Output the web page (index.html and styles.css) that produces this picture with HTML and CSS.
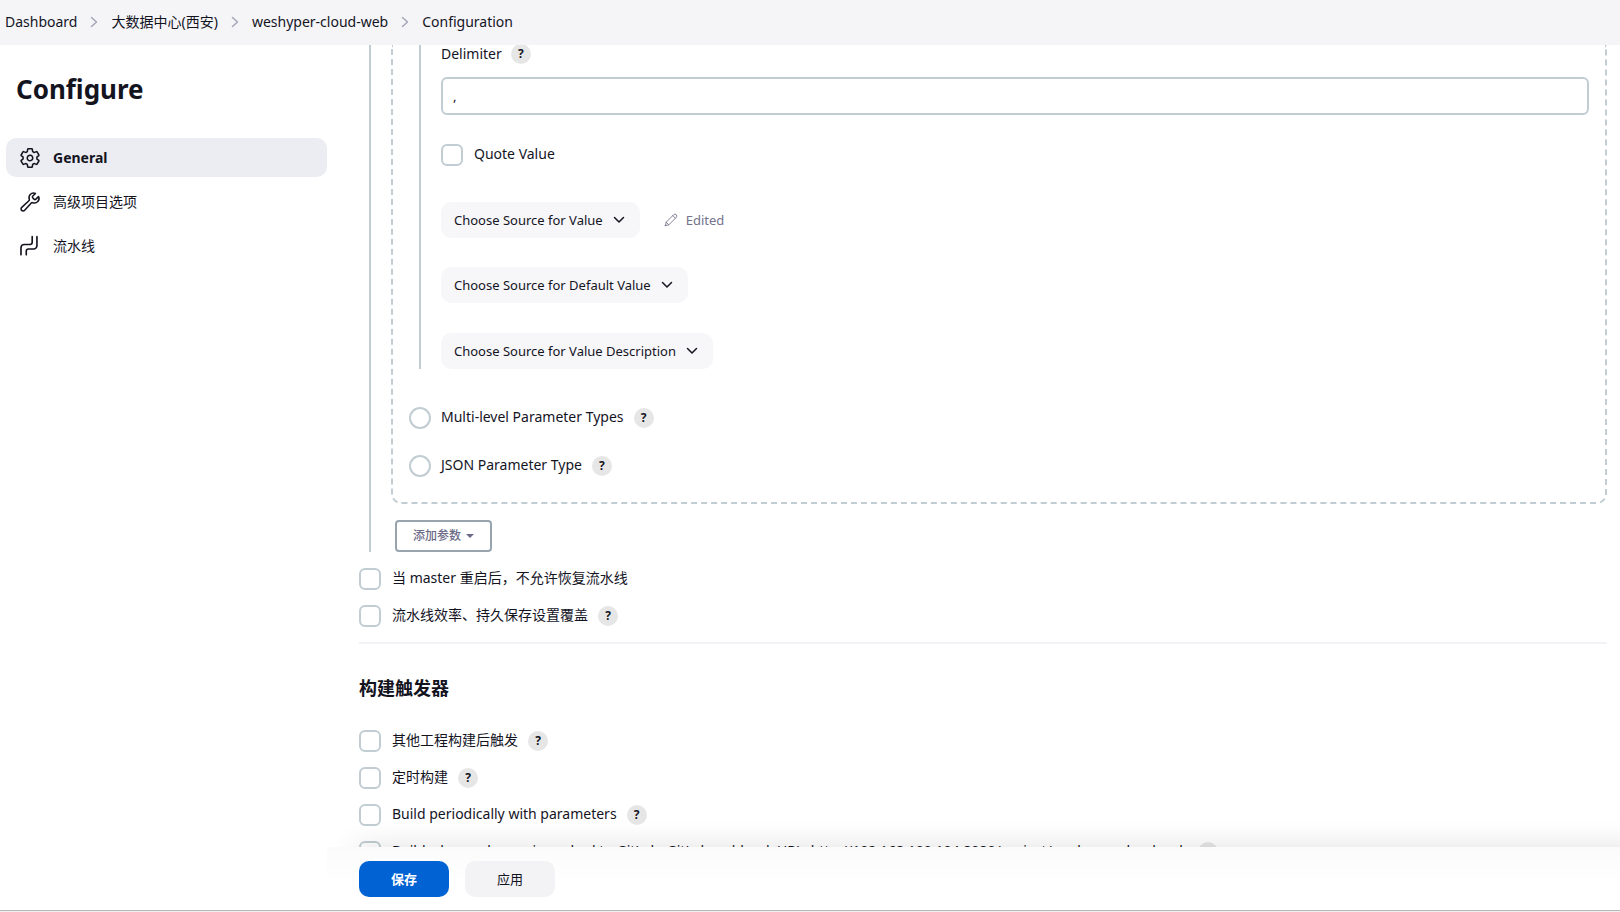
FILE: index.html
```html
<!DOCTYPE html>
<html lang="zh-CN">
<head>
    <meta charset="UTF-8">
    <meta name="viewport" content="width=device-width, initial-scale=1.0">
    <title>weshyper-cloud-web Config [Jenkins]</title>
    <link rel="stylesheet" href="styles.css">
</head>
<body>
    <nav class="breadcrumbs">
        <a href="#">Dashboard</a>
        <svg class="crumb-sep" viewBox="0 0 8 12"><path d="M1.5 1.5L6.5 6l-5 4.5"/></svg>
        <a href="#">大数据中心(西安)</a>
        <svg class="crumb-sep" viewBox="0 0 8 12"><path d="M1.5 1.5L6.5 6l-5 4.5"/></svg>
        <a href="#">weshyper-cloud-web</a>
        <svg class="crumb-sep" viewBox="0 0 8 12"><path d="M1.5 1.5L6.5 6l-5 4.5"/></svg>
        <a href="#">Configuration</a>
    </nav>

    <div class="page-body">
        <aside class="side-panel">
            <h1>Configure</h1>
            <nav class="tasks">
                <a class="task active" href="#general">
                    <svg class="task-icon" viewBox="0 0 512 512"><path d="M262.29 192.31a64 64 0 1057.4 57.4 64.13 64.13 0 00-57.4-57.4zM416.39 256a154.34 154.34 0 01-1.53 20.79l45.21 35.46a10.81 10.81 0 012.45 13.75l-42.77 74a10.81 10.81 0 01-13.14 4.59l-44.9-18.08a16.11 16.11 0 00-15.17 1.75A164.48 164.48 0 01325 400.8a15.94 15.94 0 00-8.82 12.14l-6.73 47.89a11.08 11.08 0 01-10.68 9.17h-85.54a11.11 11.11 0 01-10.69-8.87l-6.72-47.82a16.07 16.07 0 00-9-12.22 155.3 155.3 0 01-21.46-12.57 16 16 0 00-15.11-1.71l-44.89 18.07a10.81 10.81 0 01-13.14-4.58l-42.77-74a10.8 10.8 0 012.45-13.75l38.21-30a16.05 16.05 0 006-14.08c-.36-4.17-.58-8.33-.58-12.5s.21-8.27.58-12.35a16 16 0 00-6.07-13.94l-38.19-30A10.81 10.81 0 0149.48 186l42.77-74a10.81 10.81 0 0113.14-4.59l44.9 18.08a16.11 16.11 0 0015.17-1.75A164.48 164.48 0 01187 111.2a15.94 15.94 0 008.82-12.14l6.73-47.89A11.08 11.08 0 01213.23 42h85.54a11.11 11.11 0 0110.69 8.87l6.72 47.82a16.07 16.07 0 009 12.22 155.3 155.3 0 0121.46 12.57 16 16 0 0015.11 1.71l44.89-18.07a10.81 10.81 0 0113.14 4.58l42.77 74a10.8 10.8 0 01-2.45 13.75l-38.21 30a16.05 16.05 0 00-6.05 14.08c.33 4.14.55 8.3.55 12.47z"/></svg>
                    General
                </a>
                <a class="task" href="#advanced">
                    <svg class="task-icon" viewBox="0 0 512 512"><path d="M393.87 190a32.1 32.1 0 01-45.25 0l-26.57-26.57a32.09 32.09 0 010-45.26L382.19 58a1 1 0 00-.3-1.64c-38.82-16.64-89.15-8.16-121.11 23.57-30.58 30.35-32.32 76-21.12 115.84a31.93 31.93 0 01-9.06 32.08L64 380a48.17 48.17 0 1068 68l153.86-167a31.93 31.93 0 0131.6-9.13c39.54 10.59 84.54 8.6 114.72-21.19 32.49-32 39.5-88.56 23.75-120.93a1 1 0 00-1.6-.26z"/></svg>
                    高级项目选项
                </a>
                <a class="task" href="#pipeline">
                    <svg class="task-icon pipeline-icon" viewBox="0 0 20 20"><path d="M1.8 18v-6.4a3 3 0 013-3H10a2 2 0 002-2V1.500M6.600 18v-3.300a2 2 0 012-2h4.700a3 3 0 003-3V1.500"/></svg>
                    流水线
                </a>
            </nav>
        </aside>

        <main class="main-panel">
            <form class="config-form" id="config">
                <div class="nested">
                    <div class="param-card">
                        <div class="nested nested-inner">
                            <div class="field-title">
                                <label for="delimiter">Delimiter</label>
                                <button class="help" type="button">?</button>
                            </div>
                            <input class="text-input" id="delimiter" type="text" value=",">
                            <div class="option quote-value">
                                <input type="checkbox" id="quote">
                                <label for="quote">Quote Value</label>
                            </div>
                            <div class="source-row">
                                <button class="source-btn" type="button">Choose Source for Value
                                    <svg viewBox="0 0 12 8"><path d="M1.5 1.5L6 6l4.5-4.5"/></svg>
                                </button>
                                <span class="edited">
                                    <svg viewBox="0 0 16 16"><path d="M1.500 14.500l1-4L11 2a1.900 1.900 0 013 3l-8.500 8.500-4 1zM10 3l3 3M2.500 10.500l3 3"/></svg>
                                    Edited
                                </span>
                            </div>
                            <div class="source-row">
                                <button class="source-btn" type="button">Choose Source for Default Value
                                    <svg viewBox="0 0 12 8"><path d="M1.5 1.5L6 6l4.5-4.5"/></svg>
                                </button>
                            </div>
                            <div class="source-row">
                                <button class="source-btn" type="button">Choose Source for Value Description
                                    <svg viewBox="0 0 12 8"><path d="M1.5 1.5L6 6l4.5-4.5"/></svg>
                                </button>
                            </div>
                        </div>
                        <div class="option radio-option">
                            <input type="radio" name="type" id="multi">
                            <label for="multi">Multi-level Parameter Types</label>
                            <button class="help" type="button">?</button>
                        </div>
                        <div class="option radio-option">
                            <input type="radio" name="type" id="json">
                            <label for="json">JSON Parameter Type</label>
                            <button class="help" type="button">?</button>
                        </div>
                    </div>
                    <button class="add-param" type="button">添加参数 <span class="caret"></span></button>
                </div>

                <div class="options">
                    <div class="option">
                        <input type="checkbox" id="resume">
                        <label for="resume">当 master 重启后，不允许恢复流水线</label>
                    </div>
                    <div class="option">
                        <input type="checkbox" id="durability">
                        <label for="durability">流水线效率、持久保存设置覆盖</label>
                        <button class="help" type="button">?</button>
                    </div>
                </div>

                <section class="triggers">
                    <h2>构建触发器</h2>
                    <div class="options">
                        <div class="option">
                            <input type="checkbox" id="upstream">
                            <label for="upstream">其他工程构建后触发</label>
                            <button class="help" type="button">?</button>
                        </div>
                        <div class="option">
                            <input type="checkbox" id="timer">
                            <label for="timer">定时构建</label>
                            <button class="help" type="button">?</button>
                        </div>
                        <div class="option">
                            <input type="checkbox" id="periodic">
                            <label for="periodic">Build periodically with parameters</label>
                            <button class="help" type="button">?</button>
                        </div>
                        <div class="option">
                            <input type="checkbox" id="gitlab">
                            <label for="gitlab">Build when a change is pushed to GitLab. GitLab webhook URL: http://192.168.100.104:8080/project/weshyper-cloud-web</label>
                            <button class="help" type="button">?</button>
                        </div>
                    </div>
                </section>
            </form>

            <div class="bottom-bar">
                <button class="btn btn-primary" type="submit" form="config">保存</button>
                <button class="btn" type="button">应用</button>
            </div>
        </main>
    </div>
</body>
</html>
```
FILE: styles.css
```css
* {
    box-sizing: border-box;
}

html {
    background-color: #efefef;
}

body {
    margin: 0;
    height: calc(100vh - 1px);
    display: flex;
    flex-direction: column;
    overflow: hidden;
    background-color: #fff;
    color: #14141f;
    font-family: "Noto Sans", "Noto Sans CJK SC", sans-serif;
    font-size: 14px;
    line-height: 22px;
    border-bottom: 1px solid #b8b8b8;
}

button,
input {
    font: inherit;
    color: inherit;
    margin: 0;
}

button {
    cursor: pointer;
}

a {
    color: inherit;
    text-decoration: none;
}

svg {
    fill: none;
    stroke: currentColor;
    stroke-linecap: round;
    stroke-linejoin: round;
}

/* Breadcrumbs */
.breadcrumbs {
    flex: none;
    display: flex;
    align-items: center;
    gap: 13px;
    height: 45px;
    padding: 0 5px 2px;
    background-color: #f5f5f8;
}

.crumb-sep {
    width: 8px;
    height: 12px;
    color: #a5a5bb;
    stroke-width: 1.5;
}

.page-body {
    flex: 1;
    min-height: 0;
    display: flex;
}

/* Sidebar */
.side-panel {
    flex: none;
    width: 327px;
    padding: 23px 0 0 6px;
}

.side-panel h1 {
    margin: 0 0 28px 10px;
    font-size: 26px;
    line-height: 42px;
    font-weight: 700;
}

.tasks {
    display: flex;
    flex-direction: column;
    gap: 5px;
}

.task {
    display: flex;
    align-items: center;
    gap: 12px;
    height: 39px;
    padding: 0 13px;
    border-radius: 10px;
}

.task.active {
    background-color: #ecedf3;
    font-weight: 700;
}

.task-icon {
    width: 22px;
    height: 22px;
    stroke-width: 36;
}

.pipeline-icon {
    stroke-width: 1.5;
}

/* Form */
.main-panel {
    flex: 1;
    min-width: 0;
    display: flex;
    flex-direction: column;
}

.config-form {
    flex: 1;
    min-height: 0;
    overflow: hidden;
    padding: 0 13px 0 32px;
}

.nested {
    margin-left: 10px;
    padding-left: 20px;
    border-left: 2px solid #c1cdd2;
}

.param-card {
    padding: 0 16px 25px;
    border: 2px dashed #c1cdd2;
    border-top: 0;
    border-radius: 0 0 10px 10px;
}

.field-title {
    display: flex;
    align-items: center;
    gap: 9px;
    height: 18px;
}

.text-input {
    display: block;
    width: 100%;
    height: 38px;
    margin: 14px 0 29px;
    padding: 0 10px;
    border: 2px solid #c1cdd2;
    border-radius: 6px;
    background-color: #fff;
    font-size: 13px;
}

.option {
    display: flex;
    align-items: center;
    height: 22px;
}

.option label {
    margin-left: 11px;
    padding-bottom: 2px;
}

.option .help {
    margin-left: 10px;
}

.option input {
    flex: none;
    appearance: none;
    width: 22px;
    height: 22px;
    border: 2px solid #c1cdd2;
    border-radius: 6px;
    background-color: #fff;
}

.option input[type="radio"] {
    border-radius: 50%;
}

.help {
    flex: none;
    width: 20px;
    height: 20px;
    padding: 0;
    border: 0;
    border-radius: 50%;
    background-color: #e6e6e6;
    font-size: 12px;
    line-height: 20px;
    font-weight: 700;
}

.source-row {
    display: flex;
    align-items: center;
    gap: 24px;
    margin-top: 30px;
}

.quote-value + .source-row {
    margin-top: 36px;
}

.quote-value + .source-row + .source-row {
    margin-top: 29px;
}

.source-btn {
    display: flex;
    align-items: center;
    gap: 10px;
    height: 36px;
    padding: 0 15px 0 13px;
    border: 0;
    border-radius: 10px;
    background-color: #f7f7fa;
    font-size: 13px;
}

.source-btn svg {
    width: 12px;
    height: 8px;
    stroke-width: 1.5;
}

.edited {
    display: flex;
    align-items: center;
    gap: 8px;
    color: #73738c;
    font-size: 13px;
}

.edited svg {
    width: 14px;
    height: 14px;
}

.radio-option {
    margin-top: 26px;
}

.nested-inner + .radio-option {
    margin-top: 38px;
}

.radio-option label {
    margin-left: 10px;
}

.add-param {
    display: flex;
    align-items: center;
    gap: 5px;
    height: 32px;
    margin: 16px 0 0 4px;
    padding: 0 16px;
    border: 2px solid #98a5af;
    border-radius: 4px;
    background-color: #fff;
    color: #6b6b87;
    font-size: 12px;
    font-weight: 500;
}

.caret {
    border: 4px solid transparent;
    border-top-color: currentColor;
    border-bottom: 0;
}

.options {
    display: flex;
    flex-direction: column;
    gap: 15px;
    margin-top: 16px;
}

.triggers {
    margin-top: 15px;
    border-top: 2px solid #f2f2f7;
}

.triggers h2 {
    margin: 32px 0 30px;
    font-size: 18px;
    line-height: 24px;
    font-weight: 700;
}

/* Save / apply bar */
.bottom-bar {
    position: relative;
    flex: none;
    display: flex;
    gap: 16px;
    padding: 14px 32px 13px;
    background: linear-gradient(#fbfbfb, #fff 36px);
    box-shadow: 30px 0 30px rgba(0, 0, 0, 0.12);
}

.btn {
    width: 90px;
    height: 36px;
    padding: 0;
    border: 0;
    border-radius: 10px;
    background-color: #f3f3f6;
    font-size: 13px;
}

.btn-primary {
    background-color: #0062d3;
    color: #fff;
    font-weight: 700;
}
```
